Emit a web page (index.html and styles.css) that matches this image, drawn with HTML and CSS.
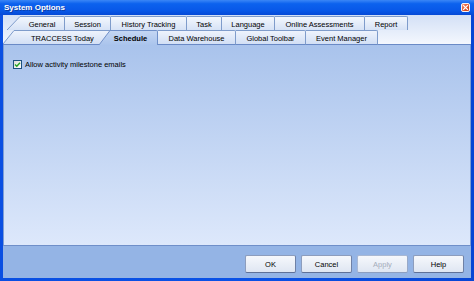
FILE: index.html
```html
<!DOCTYPE html>
<html>
<head>
<meta charset="utf-8">
<title>System Options</title>
<link rel="stylesheet" href="styles.css">
</head>
<body>
<div class="window">
  <div class="titlebar">
    <span class="title">System Options</span>
    <span class="close">
      <svg width="9" height="9" viewBox="0 0 9 9">
        <defs>
          <linearGradient id="cg" x1="0" y1="0" x2="1" y2="1">
            <stop offset="0" stop-color="#f5a184"/>
            <stop offset="0.5" stop-color="#e4562b"/>
            <stop offset="1" stop-color="#c53a10"/>
          </linearGradient>
        </defs>
        <rect x="0.5" y="0.5" width="8" height="8" rx="1.5" fill="url(#cg)" stroke="#f4f4f4" stroke-width="1"/>
        <path d="M2.6 2.6 L6.4 6.4 M6.4 2.6 L2.6 6.4" stroke="#fff" stroke-width="1.3" stroke-linecap="square"/>
      </svg>
    </span>
  </div>
  <div class="client">
    <div class="tabstrip">
      <div class="tabrow row1">
        <svg class="ear" width="13" height="14" viewBox="0 0 13 14">
          <defs>
            <linearGradient id="tg1" x1="0" y1="0" x2="0" y2="1">
              <stop offset="0" stop-color="#f3f7fd"/>
              <stop offset="1" stop-color="#d6e2f6"/>
            </linearGradient>
          </defs>
          <polygon points="0,14 13,0.5 13,14" fill="url(#tg1)"/>
          <line x1="0" y1="14" x2="13" y2="0.5" stroke="#7f9ccb" stroke-width="1"/>
        </svg>
        <div class="tab w-general">General</div>
        <div class="tab w-session">Session</div>
        <div class="tab w-history">History Tracking</div>
        <div class="tab w-task">Task</div>
        <div class="tab w-language">Language</div>
        <div class="tab w-online">Online Assessments</div>
        <div class="tab w-report">Report</div>
      </div>
      <div class="tabrow row2">
        <svg class="ear" width="11" height="15" viewBox="0 0 11 15">
          <defs>
            <linearGradient id="tg2" x1="0" y1="0" x2="0" y2="1">
              <stop offset="0" stop-color="#eef3fc"/>
              <stop offset="1" stop-color="#d2dff5"/>
            </linearGradient>
          </defs>
          <polygon points="0,14 11,0.5 11,14" fill="url(#tg2)"/>
          <line x1="0" y1="14" x2="11" y2="0.5" stroke="#7f9ccb" stroke-width="1"/>
          <line x1="0" y1="14.5" x2="11" y2="14.5" stroke="#6a8ac6" stroke-width="1"/>
        </svg>
        <div class="tab first-r2 w-traccess">TRACCESS Today</div>
        <svg class="ear" width="11" height="15" viewBox="0 0 11 15">
          <defs>
            <linearGradient id="tg3" x1="0" y1="0" x2="0" y2="1">
              <stop offset="0" stop-color="#eef3fc"/>
              <stop offset="1" stop-color="#d2dff5"/>
            </linearGradient>
            <linearGradient id="tgs" x1="0" y1="0" x2="0" y2="1">
              <stop offset="0" stop-color="#c4d6f3"/>
              <stop offset="1" stop-color="#aac4ec"/>
            </linearGradient>
          </defs>
          <polygon points="0,0 11,0 0,15" fill="url(#tg3)"/>
          <line x1="0" y1="0.5" x2="11" y2="0.5" stroke="#7f9ccb" stroke-width="1"/>
          <polygon points="0,15 11,0.5 11,15" fill="url(#tgs)"/>
          <line x1="0" y1="15" x2="11" y2="0.5" stroke="#6f8fc8" stroke-width="1"/>
        </svg>
        <div class="tab selected w-schedule">Schedule</div>
        <div class="tab w-warehouse">Data Warehouse</div>
        <div class="tab w-toolbar">Global Toolbar</div>
        <div class="tab w-event">Event Manager</div>
        <div class="fill"></div>
      </div>
    </div>
    <div class="panel">
      <label class="check">
        <span class="box">
          <svg width="7" height="7" viewBox="0 0 7 7">
            <path d="M1 3.4 L2.8 5.2 L6 1.8" fill="none" stroke="#21a121" stroke-width="1.4"/>
          </svg>
        </span>
        <span class="label">Allow activity milestone emails</span>
      </label>
    </div>
    <div class="buttonbar">
      <button class="btn">OK</button>
      <button class="btn">Cancel</button>
      <button class="btn disabled">Apply</button>
      <button class="btn">Help</button>
    </div>
  </div>
</div>
</body>
</html>
```

FILE: styles.css
```css
* {
  box-sizing: border-box;
}

html,
body {
  margin: 0;
  padding: 0;
}

body {
  width: 474px;
  height: 281px;
  overflow: hidden;
  font-family: "Liberation Sans", Arial, sans-serif;
  font-size: 7.5px;
  color: #000;
}

.window {
  width: 474px;
  height: 281px;
  display: flex;
  flex-direction: column;
  background: linear-gradient(to right, #0a4fe2, #0b52e6 50%, #0846d4);
}

.titlebar {
  height: 15px;
  flex: 0 0 15px;
  display: flex;
  align-items: center;
  justify-content: space-between;
  padding: 0 4px 0 4px;
  background: linear-gradient(to bottom, #3b86f6 0%, #0c62ee 25%, #0858e8 70%, #0549d6 100%);
  color: #fff;
}

.title {
  font-weight: bold;
  font-size: 8px;
  text-shadow: 1px 1px 0 #0a3da8;
}

.close {
  width: 9px;
  height: 9px;
  display: flex;
}

.client {
  flex: 1;
  margin: 0 3px 3px 3px;
  display: flex;
  flex-direction: column;
}

.tabstrip {
  height: 30px;
  flex: 0 0 30px;
  padding-top: 1px;
  display: flex;
  flex-direction: column;
  background: linear-gradient(to bottom, #d3e0f6, #f5f8fe);
}

.tabrow {
  display: flex;
  height: 14px;
}

.row1 {
  padding-left: 4px;
}

.row2 {
  height: 15px;
}

.ear {
  display: block;
  flex: 0 0 auto;
}

.tab {
  height: 14px;
  flex: 0 0 auto;
  display: flex;
  align-items: center;
  justify-content: center;
  white-space: nowrap;
  border-top: 1px solid #7f9ccb;
  border-right: 1px solid #7f9ccb;
  border-top-right-radius: 2px;
  background: linear-gradient(to bottom, #f3f7fd, #d6e2f6);
  padding-top: 1px;
}

.row2 .tab {
  height: 15px;
  border-bottom: 1px solid #6a8ac6;
  background: linear-gradient(to bottom, #eef3fc, #d2dff5);
}

.row2 .tab.first-r2 {
  justify-content: flex-start;
  padding-left: 17px;
  border-right: none;
  border-top-right-radius: 0;
}

.row2 .tab.selected {
  border-bottom: none;
  border-right-color: #6f8fc8;
  border-top-color: #6f8fc8;
  background: linear-gradient(to bottom, #c4d6f3, #aac4ec);
  font-weight: bold;
  padding-right: 6px;
}

.fill {
  flex: 1;
  border-bottom: 1px solid #6a8ac6;
}

.w-general { width: 45px; }
.w-session { width: 46px; }
.w-history { width: 76px; }
.w-task { width: 35px; }
.w-language { width: 53px; }
.w-online { width: 90px; }
.w-report { width: 43px; }
.w-traccess { width: 85px; }
.w-schedule { width: 48px; }
.w-warehouse { width: 78px; }
.w-toolbar { width: 70px; }
.w-event { width: 72px; }

.panel {
  height: 201px;
  flex: 0 0 201px;
  border-left: 1px solid #7e9dd3;
  border-right: 1px solid #7e9dd3;
  border-bottom: 1px solid #6f8fc9;
  background: linear-gradient(to bottom, #a9c3ec, #dde8fb);
  padding: 15px 0 0 9px;
}

.check {
  display: flex;
  align-items: center;
  gap: 3px;
  height: 9px;
}

.box {
  width: 9px;
  height: 9px;
  border: 1px solid #1c5180;
  background: linear-gradient(135deg, #dcdcd7, #ffffff);
  display: flex;
  align-items: center;
  justify-content: center;
}

.label {
  white-space: nowrap;
}

.buttonbar {
  flex: 1;
  display: flex;
  justify-content: flex-end;
  align-items: flex-start;
  gap: 5px;
  padding: 9px 7px 0 0;
  background: #94b4e5;
}

.btn {
  width: 51px;
  height: 18px;
  margin: 0;
  padding: 0;
  font-family: "Liberation Sans", Arial, sans-serif;
  font-size: 7.5px;
  color: #000;
  border: 1px solid;
  border-color: #8d9dbd #6f81a6 #5f7198 #8d9dbd;
  border-radius: 2px;
  background: linear-gradient(to bottom, #f6f8fc, #dfe6f2);
}

.btn.disabled {
  color: #a5adbb;
  border-color: #a9b8d3 #98a9c8 #8c9ec0 #a9b8d3;
}
```
